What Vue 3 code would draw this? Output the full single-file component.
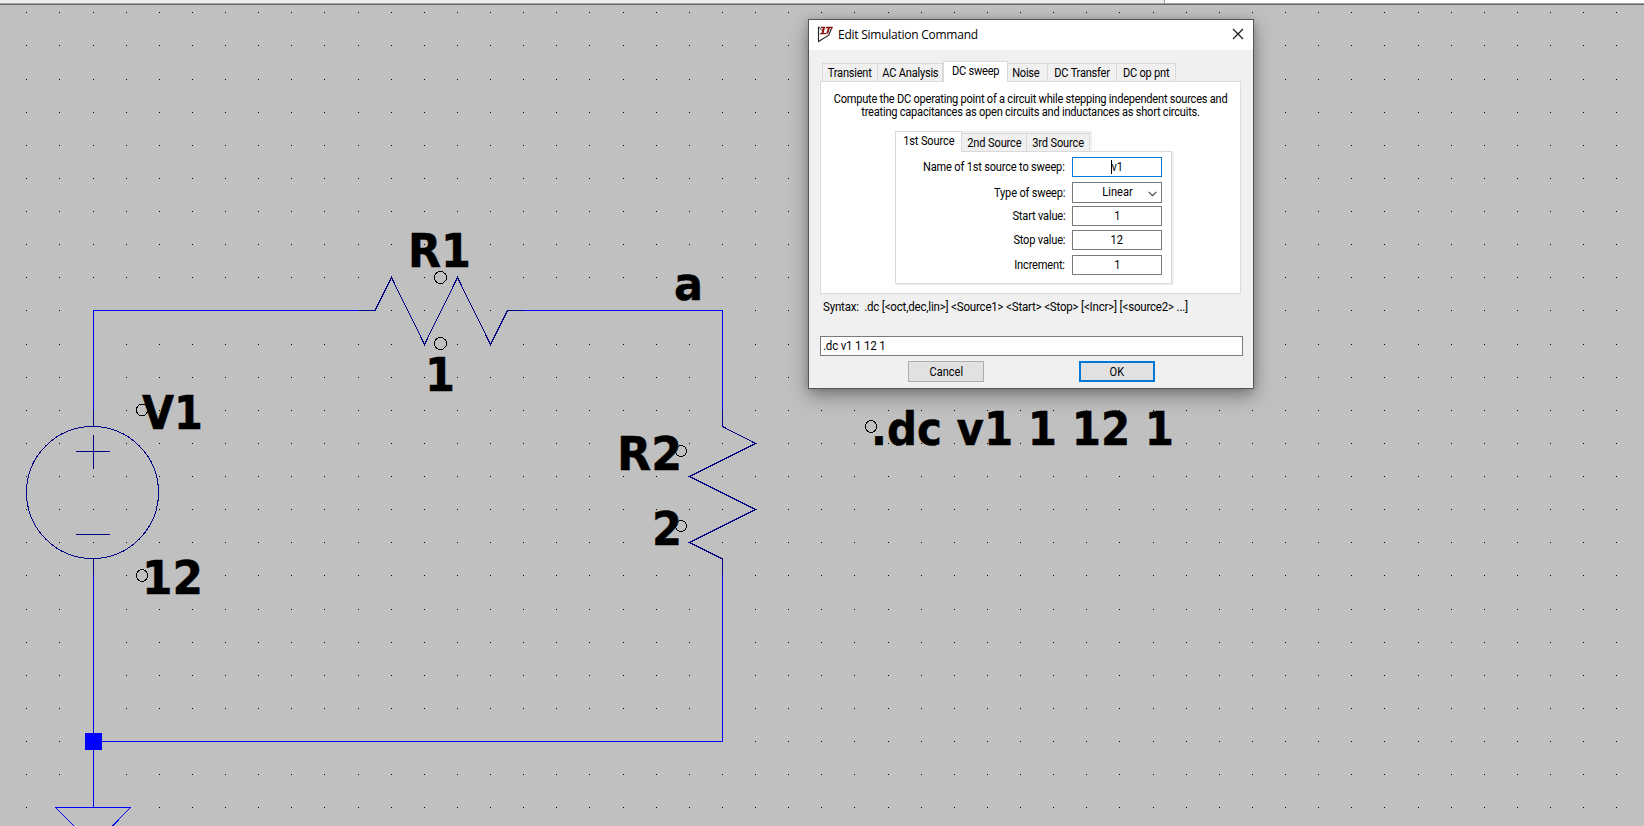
<script setup>
const cols = Array.from({ length: 49 }, (_, n) => Math.floor(26.75 + 33.125 * n))
const rows = Array.from({ length: 25 }, (_, n) => Math.floor(12.8 + 33.125 * n))
const dots = rows.map(y => cols.map(x => `M${x} ${y}h1v1h-1z`).join('')).join('')

const labels = [
  { t: 'R1', x: 408, y: 267, w: 63 },
  { t: '1', x: 425, y: 391, w: 30 },
  { t: 'a', x: 674, y: 300, w: 29 },
  { t: 'V1', x: 142, y: 429, w: 61 },
  { t: '12', x: 142, y: 593.5, w: 61 },
  { t: 'R2', x: 617, y: 470, w: 65 },
  { t: '2', x: 652, y: 545, w: 30 },
  { t: '.dc v1 1 12 1', x: 871, y: 445, w: 303 }
]
const anchors = [
  [440.5, 277.5, 6, 6], [440.5, 343.5, 6, 6], [142, 410, 5.5, 6], [142, 575.5, 5.5, 6],
  [681, 451, 5.5, 5.5], [681, 526, 5.5, 5.5], [871, 426.5, 5.5, 6]
]
const tabs = [
  { t: 'Transient', c: 'transient' },
  { t: 'AC Analysis', c: 'ac' },
  { t: 'DC sweep', c: 'sweep active' },
  { t: 'Noise', c: 'noise' },
  { t: 'DC Transfer', c: 'transfer' },
  { t: 'DC op pnt', c: 'op' }
]
const fields = [
  { label: 'Start value:', value: '1', c: 'start' },
  { label: 'Stop value:', value: '12', c: 'stop' },
  { label: 'Increment:', value: '1', c: 'incr' }
]
</script>

<template>
  <div class="app">
    <div class="strip"><div class="strip-left"></div></div>
    <svg class="sheet" width="1644" height="826" viewBox="0 0 1644 826">
      <path :d="dots" fill="#000" shape-rendering="crispEdges" />
      <g class="wire">
        <path d="M93.5 410V310.5H358M523 310.5H722.5V410M722.5 575V741.5H93.5M93.5 575V807" />
        <path d="M55 807.5H131M56 808L93.5 845.5L130 808" />
        <rect class="node" x="85" y="733" width="17" height="17" />
      </g>
      <g class="part">
        <path d="M93.5 410V426M93.5 559V575M93.5 435V469M76 451.5H110M76 534.5H110" />
        <circle cx="92.5" cy="492.5" r="66" />
        <path d="M358 310.5H375L391.5 277.5L424.5 344.5L457.5 277.5L490.5 344.5L507.5 310.5H523" />
        <path d="M722.5 410V426.5L755.5 443.5L689.5 476.5L755.5 509.5L689.5 542.5L722.5 559V575" />
      </g>
      <g class="anchor">
        <ellipse v-for="(a, i) in anchors" :key="i" :cx="a[0]" :cy="a[1]" :rx="a[2]" :ry="a[3]" />
      </g>
      <text v-for="(l, i) in labels" :key="i" :x="l.x" :y="l.y" :textLength="l.w" lengthAdjust="spacingAndGlyphs">{{ l.t }}</text>
    </svg>

    <section class="dialog">
      <header>
        <svg class="logo" width="17" height="17" viewBox="0 0 17 17">
          <path d="M1.5 .8V15.5L11.8 9.2L15 1" fill="none" stroke="#222" stroke-width="1.1" />
          <path d="M1.5 .8L5 4.5" stroke="#222" />
          <path d="M4 .7H8.2L6.6 7H9.2L8.8 8.3H2.8L3.3 7H4.6L5.7 2H3.7zM8.8 .7H15.8L15 3.5H14L14 2H12.9L11.2 7.7H9.2L10.9 2H9.8L8.8 3.3z" fill="#8b1010" />
        </svg>
        <h1>Edit Simulation Command</h1>
        <svg class="close" width="12" height="12" viewBox="0 0 12 12"><path d="M1 1L11 11M11 1L1 11" stroke="#111" stroke-width="1.1" /></svg>
      </header>
      <nav class="tabs">
        <div v-for="t in tabs" :key="t.t" class="tab" :class="t.c"><span class="t">{{ t.t }}</span></div>
      </nav>
      <div class="panel">
        <p class="desc"><span class="t">Compute the DC operating point of a circuit while stepping independent sources and</span><br /><span class="t">treating capacitances as open circuits and inductances as short circuits.</span></p>
        <div class="inner">
          <nav class="subtabs">
            <div class="sub first"><span class="t">1st Source</span></div>
            <div class="sub second"><span class="t">2nd Source</span></div>
            <div class="sub third"><span class="t">3rd Source</span></div>
          </nav>
          <div class="form">
            <div class="row name"><label class="t">Name of 1st source to sweep:</label><div class="box focus"><i class="caret"></i><span class="t">v1</span></div></div>
            <div class="row type"><label class="t">Type of sweep:</label><div class="box"><span class="t">Linear</span>
              <svg class="chev" width="9" height="6" viewBox="0 0 9 6"><path d="M.6 .8L4.5 4.7L8.4 .8" fill="none" stroke="#444" stroke-width="1.1" /></svg>
            </div></div>
            <div v-for="f in fields" :key="f.c" class="row" :class="f.c"><label class="t">{{ f.label }}</label><div class="box"><span class="t">{{ f.value }}</span></div></div>
          </div>
        </div>
      </div>
      <p class="syntax"><span class="t">Syntax:&nbsp; .dc [&lt;oct,dec,lin&gt;] &lt;Source1&gt; &lt;Start&gt; &lt;Stop&gt; [&lt;Incr&gt;] [&lt;source2&gt; ...]</span></p>
      <div class="command"><span class="t">.dc v1 1 12 1</span></div>
      <footer><button><span class="t">Cancel</span></button><button class="ok"><span class="t">OK</span></button></footer>
    </section>
  </div>
</template>

<style>
body { margin: 0; overflow: hidden; }
</style>

<style scoped>
* { box-sizing: border-box; }
.app { position: relative; width: 1644px; height: 826px; background: #c0c0c0; overflow: hidden; font-family: Roboto, "Liberation Sans", sans-serif; font-size: 12px; color: #000; }
.strip { height: 5px; background: #fff; border-bottom: 1px solid #696969; box-shadow: inset 0 -1px #a0a0a0; }
.strip-left { width: 1165px; height: 3px; background: #ececec; border-right: 1px solid #999; }
.sheet { position: absolute; left: 0; top: 0; }
.wire, .part { fill: none; stroke: #0000ff; stroke-width: 1; shape-rendering: crispEdges; }
.part { stroke: #000080; }
.node { fill: #0000ff; stroke: none; }
.anchor { fill: none; stroke: #000; stroke-width: 1; shape-rendering: crispEdges; }
.sheet text { font: bold 47px "DejaVu Sans", sans-serif; stroke: #000; stroke-width: .5; }

.t { display: inline-block; transform: scaleX(.922); }
.dialog { position: absolute; left: 808px; top: 19px; width: 446px; height: 370px; border: 1px solid #555; background: #f0f0f0; box-shadow: 0 7px 18px rgba(0, 0, 0, .36), 0 1px 7px rgba(0, 0, 0, .15); }
header { display: flex; align-items: center; height: 30px; padding: 0 9px 0 8px; background: #fff; }
.logo { margin-top: -2px; }
h1 { flex: 1; margin: -2px 0 0 4px; font: 400 12px "Open Sans", "Noto Sans", sans-serif; letter-spacing: -.25px; }
.close { margin-top: -2px; }
.tabs { display: flex; align-items: flex-end; height: 20px; margin: 11px 0 0 13px; }
.tab { display: flex; justify-content: center; height: 18px; border: 1px solid #d9d9d9; border-left: 0; border-bottom: 0; line-height: 19px; white-space: nowrap; letter-spacing: -.25px; }
.transient { width: 56px; border-left: 1px solid #d9d9d9; }
.ac { width: 65px; }
.sweep { width: 65px; }
.noise { width: 40px; justify-content: flex-start; padding-left: 3px; }
.transfer { width: 69px; }
.op { width: 59px; }
.tab.active { position: relative; height: 21px; margin-bottom: -1px; background: #fff; border-left: 1px solid #d9d9d9; }
.panel { width: 421px; height: 213px; margin-left: 11px; border: 1px solid #dcdcdc; background: #fff; }
.desc { display: block; height: 49px; margin: 0 -10px; padding-top: 11px; line-height: 13px; text-align: center; white-space: nowrap; letter-spacing: -.25px; }
.inner { width: 279px; margin-left: 74px; }
.subtabs { display: flex; align-items: flex-end; width: 197px; height: 20px; background: #f0f0f0; }
.sub { display: flex; justify-content: center; height: 18px; border: 1px solid #d9d9d9; border-left: 0; border-bottom: 0; line-height: 18px; white-space: nowrap; letter-spacing: -.15px; }
.first { position: relative; width: 67px; height: 21px; margin-bottom: -1px; border-left: 1px solid #d9d9d9; background: #fff; line-height: 19px; }
.second { width: 65px; }
.third { width: 63px; }
.form { width: 277px; height: 133px; padding-top: 5px; border: 1px solid #d9d9d9; background: #fff; box-shadow: 2px 1px #f0f0f0; }
.row { display: flex; align-items: center; justify-content: flex-end; height: 20px; margin: 0 9px 4px 0; }
.row label { margin-right: 7px; letter-spacing: -.2px; transform-origin: right; }
.box { position: relative; width: 90px; height: 20px; border: 1px solid #7a7a7a; line-height: 18px; text-align: center; }
.focus { border-color: #0078d7; }
.caret { position: absolute; left: 38px; top: 2px; width: 1px; height: 14px; background: #000; }
.type { height: 21px; margin-top: 5px; margin-bottom: 3px; }
.type .box { height: 21px; line-height: 19px; }
.chev { position: absolute; right: 4px; top: 8px; }
.stop { margin-bottom: 5px; }
.syntax { height: 42px; margin: 0 0 0 14px; padding-top: 5px; line-height: 16px; white-space: nowrap; letter-spacing: -.2px; }
.syntax .t { transform: scaleX(.96); transform-origin: left; }
.command { width: 423px; height: 20px; margin-left: 11px; padding-left: 2px; border: 1px solid #7a7a7a; background: #fff; line-height: 18px; letter-spacing: -.2px; }
.command .t { transform: scaleX(.96); transform-origin: left; }
footer { display: flex; gap: 95px; padding: 5px 0 0 99px; }
button { width: 76px; height: 21px; padding: 0; border: 1px solid #adadad; background: #e1e1e1; font: inherit; color: #000; }
.ok { border: 2px solid #0078d7; }
</style>
